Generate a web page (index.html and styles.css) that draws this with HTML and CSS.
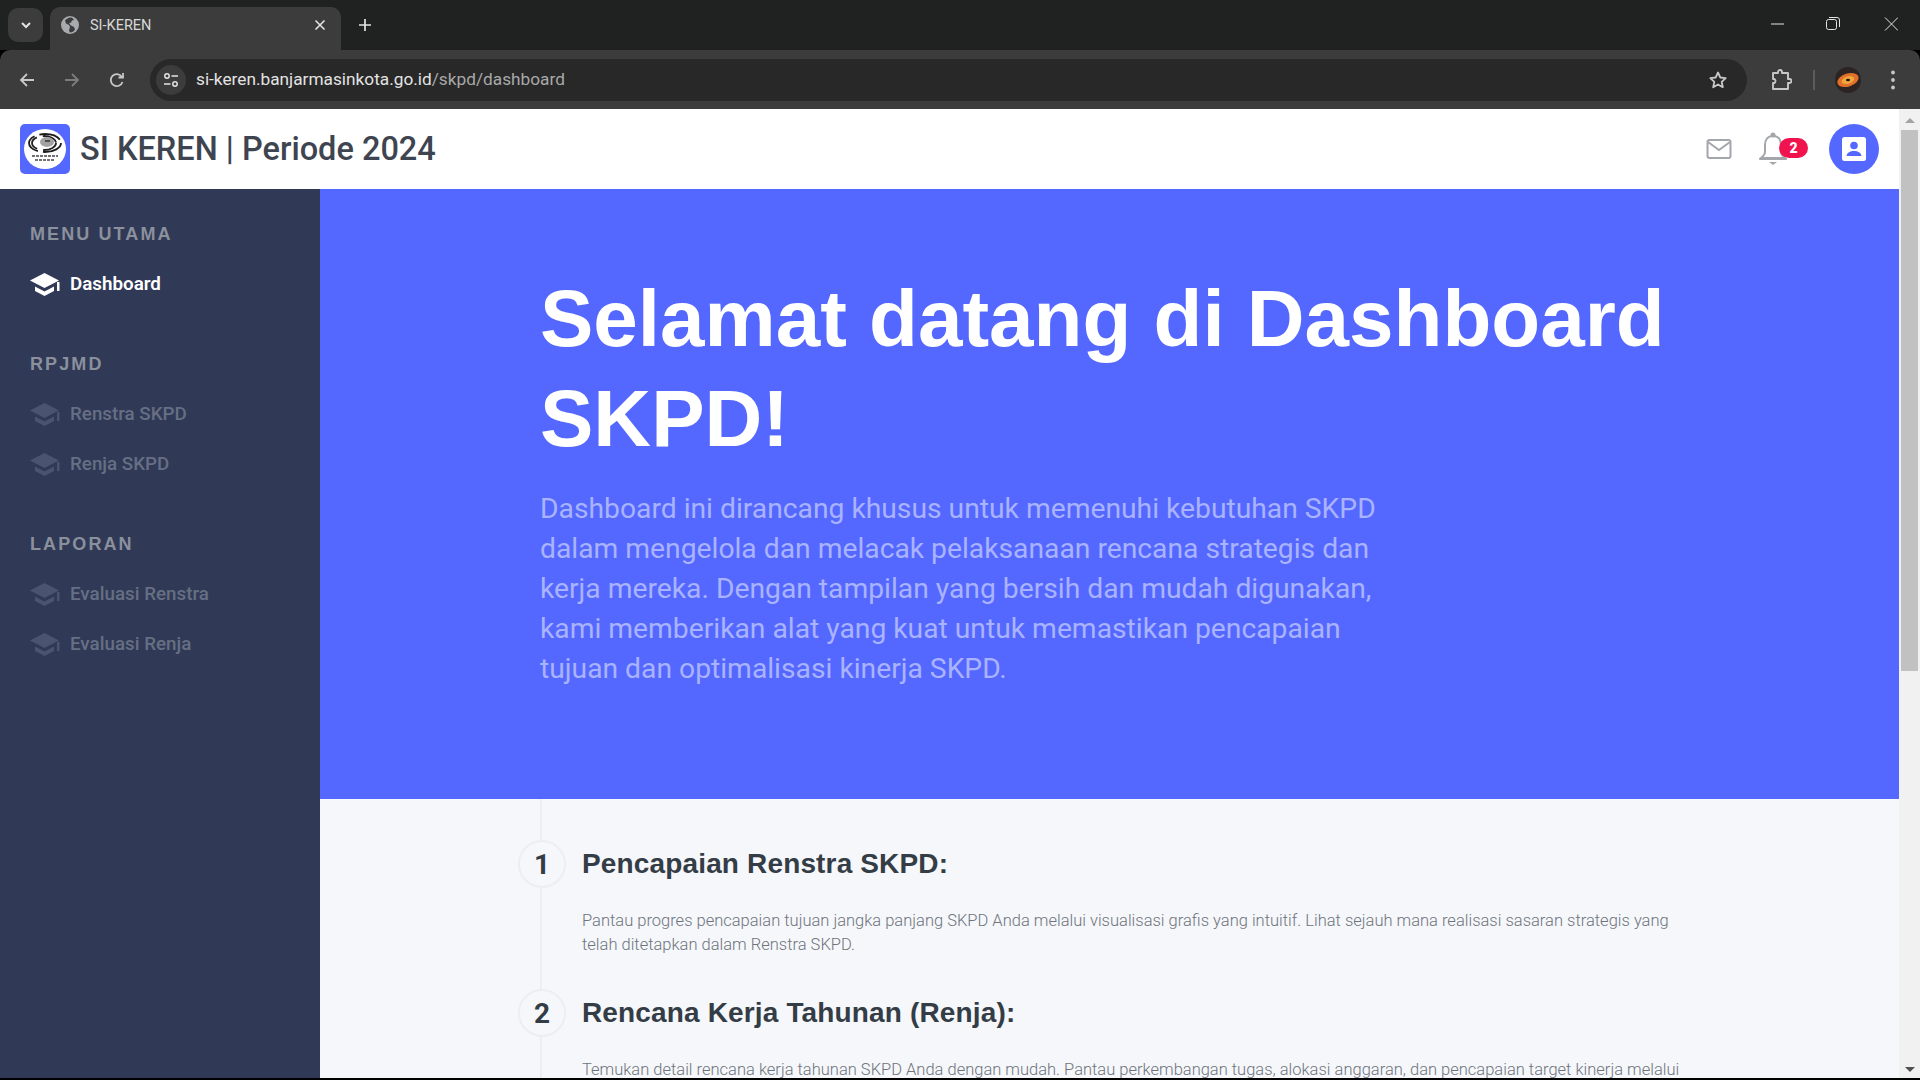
FILE: index.html
```html
<!DOCTYPE html>
<html lang="id">
<head>
    <meta charset="UTF-8">
    <title>SI-KEREN</title>
    <link rel="stylesheet" href="styles.css">
</head>
<body>
<div class="browser">
    <div class="tabstrip">
        <div class="tab-search">
            <svg width="14" height="14" viewBox="0 0 14 14"><path d="M3 5l4 4 4-4" fill="none" stroke="#e3e3e3" stroke-width="2"/></svg>
        </div>
        <div class="tab">
            <svg width="18" height="18" viewBox="0 0 18 18"><circle cx="9" cy="9" r="9" fill="#a8abad"/><path d="M9 1.500c-2 .5-4 1.500-5 3l1 3 3 1.500 1 2-1 3.500 1 2c2 0 4-1 5-3l-1-2.500-3-1.500-2-2 2-1 1-2 2-.5C12 2 10.500 1.500 9 1.500z" fill="#3c3c3c"/></svg>
            <span class="tab-title">SI-KEREN</span>
            <svg class="tab-close" width="14" height="14" viewBox="0 0 14 14"><path d="M2.500 2.500l9 9M11.500 2.500l-9 9" stroke="#e3e3e3" stroke-width="1.600"/></svg>
        </div>
        <svg class="new-tab" width="16" height="16" viewBox="0 0 16 16"><path d="M8 2v12M2 8h12" stroke="#e3e3e3" stroke-width="1.700"/></svg>
        <div class="win-controls">
            <svg width="16" height="16" viewBox="0 0 16 16"><path d="M3 8h13" stroke="#e3e3e3" stroke-width="1"/></svg>
            <svg width="16" height="16" viewBox="0 0 16 16"><rect x="1.500" y="3.500" width="10" height="10" rx="2" fill="none" stroke="#e3e3e3"/><path d="M4 1.500h8a2.500 2.500 0 0 1 2.500 2.500v7" fill="none" stroke="#e3e3e3"/></svg>
            <svg width="16" height="16" viewBox="0 0 16 16"><path d="M3 1.500l13 13M16 1.500l-13 13" stroke="#e3e3e3" stroke-width="1"/></svg>
        </div>
    </div>
    <div class="toolbar">
        <svg class="nav-icon" width="18" height="18" viewBox="0 0 18 18"><path d="M16 9H3M9 3L3 9l6 6" fill="none" stroke="#c7c7c7" stroke-width="1.800"/></svg>
        <svg class="nav-icon" width="18" height="18" viewBox="0 0 18 18"><path d="M2 9h13M9 3l6 6-6 6" fill="none" stroke="#7d7d7d" stroke-width="1.800"/></svg>
        <svg class="nav-icon" width="18" height="18" viewBox="0 0 18 18"><path d="M14.500 11a6 6 0 1 1-.7-5.200M15 2v4.500h-4.500" fill="none" stroke="#c7c7c7" stroke-width="1.800"/></svg>
        <div class="omnibox">
            <div class="site-info">
                <svg width="16" height="16" viewBox="0 0 16 16"><circle cx="4" cy="4" r="2.200" fill="none" stroke="#e3e3e3" stroke-width="1.500"/><path d="M8.500 4H15M1 12h6.500" stroke="#e3e3e3" stroke-width="1.500"/><circle cx="12" cy="12" r="2.200" fill="none" stroke="#e3e3e3" stroke-width="1.500"/></svg>
            </div>
            <span class="url">si-keren.banjarmasinkota.go.id<span class="url-path">/skpd/dashboard</span></span>
            <svg class="star" width="20" height="20" viewBox="0 0 20 20"><path d="M10 2.500l2.300 5 5.400.6-4 3.700 1.100 5.400L10 14.500l-4.800 2.700 1.100-5.400-4-3.700 5.400-.6z" fill="none" stroke="#c7c7c7" stroke-width="1.800" stroke-linejoin="round"/></svg>
        </div>
        <svg class="ext-icon" width="22" height="22" viewBox="0 0 22 22"><path d="M3 4h5V3a2 2 0 0 1 4 0v1h6v6h1.500a2 2 0 0 1 0 4H18v6H3v-6h1.500a2.500 2.500 0 0 0 0-4H3z" fill="none" stroke="#c7c7c7" stroke-width="1.900" stroke-linejoin="round"/></svg>
        <div class="tool-sep"></div>
        <svg class="profile" width="26" height="26" viewBox="0 0 26 26"><circle cx="13" cy="13" r="13" fill="#2b2422"/><ellipse cx="13" cy="13" rx="11" ry="6.500" transform="rotate(-18 13 13)" fill="#e0702a"/><ellipse cx="13" cy="13" rx="6.500" ry="3.600" transform="rotate(-18 13 13)" fill="#f0a63c"/><ellipse cx="13" cy="13" rx="2" ry="1.200" fill="#1c1410"/></svg>
        <svg class="dots" width="6" height="22" viewBox="0 0 6 22"><circle cx="3" cy="3.500" r="1.900" fill="#c7c7c7"/><circle cx="3" cy="11" r="1.900" fill="#c7c7c7"/><circle cx="3" cy="18.500" r="1.900" fill="#c7c7c7"/></svg>
    </div>
</div>

<div class="viewport">
    <div class="page">
        <header class="topbar">
            <div class="brand">
                <div class="brand-logo">
                    <svg width="42" height="42" viewBox="0 0 42 42">
                        <ellipse cx="21" cy="21" rx="21" ry="20" fill="#fff"/>
                        <ellipse cx="21" cy="15" rx="16" ry="9" fill="none" stroke="#1d1d1d" stroke-width="1.800" stroke-dasharray="22 5"/>
                        <ellipse cx="20" cy="15" rx="12" ry="7" fill="none" stroke="#222" stroke-width="1.800" stroke-dasharray="16 6"/>
                        <ellipse cx="23" cy="14" rx="7" ry="5" fill="#a2a2a2"/>
                        <path d="M21 13h5" stroke="#333" stroke-width="1.500"/>
                        <path d="M8 28h26M11 32h20" stroke="#444" stroke-width="1.500" stroke-dasharray="3 1"/>
                    </svg>
                </div>
                <span class="brand-title">SI KEREN | Periode 2024</span>
            </div>
            <div class="top-actions">
                <svg class="mail" width="26" height="22" viewBox="0 0 26 22"><rect x="1.500" y="2" width="23" height="18" rx="2" fill="none" stroke="#a3a6ab" stroke-width="2"/><path d="M2 4l11 8 11-8" fill="none" stroke="#a3a6ab" stroke-width="2"/></svg>
                <div class="bell-wrap">
                    <svg width="28" height="34" viewBox="0 0 28 34"><circle cx="14" cy="3" r="2.500" fill="#a3a6ab"/><path d="M14 4c-5.500 0-8 4-8 9v7c0 2-1.500 4-4 6h24c-2.500-2-4-4-4-6v-7c0-5-2.500-9-8-9z" fill="none" stroke="#a3a6ab" stroke-width="2"/><path d="M1 27h26" stroke="#a3a6ab" stroke-width="2" stroke-linecap="round"/><path d="M10 30h8l-4 3z" fill="#a3a6ab"/></svg>
                    <span class="badge">2</span>
                </div>
                <div class="avatar">
                    <svg width="24" height="24" viewBox="0 0 24 24"><rect width="24" height="24" rx="2.500" fill="#fff"/><circle cx="12" cy="8.500" r="3.800" fill="#5468ff"/><path d="M4.500 19c.5-3.500 3.500-5 7.500-5s7 1.500 7.500 5z" fill="#5468ff"/></svg>
                </div>
            </div>
        </header>

        <div class="layout">
            <nav class="sidebar">
                <div class="menu-label">MENU UTAMA</div>
                <a class="menu-item active"><svg class="cap" viewBox="0 0 30 24"><use href="#cap"/></svg>Dashboard</a>
                <div class="menu-label">RPJMD</div>
                <a class="menu-item"><svg class="cap" viewBox="0 0 30 24"><use href="#cap"/></svg>Renstra SKPD</a>
                <a class="menu-item"><svg class="cap" viewBox="0 0 30 24"><use href="#cap"/></svg>Renja SKPD</a>
                <div class="menu-label">LAPORAN</div>
                <a class="menu-item"><svg class="cap" viewBox="0 0 30 24"><use href="#cap"/></svg>Evaluasi Renstra</a>
                <a class="menu-item"><svg class="cap" viewBox="0 0 30 24"><use href="#cap"/></svg>Evaluasi Renja</a>
            </nav>

            <main class="content">
                <section class="hero">
                    <h1>Selamat datang di Dashboard SKPD!</h1>
                    <p>Dashboard ini dirancang khusus untuk memenuhi kebutuhan SKPD dalam mengelola dan melacak pelaksanaan rencana strategis dan kerja mereka. Dengan tampilan yang bersih dan mudah digunakan, kami memberikan alat yang kuat untuk memastikan pencapaian tujuan dan optimalisasi kinerja SKPD.</p>
                </section>
                <section class="steps">
                    <div class="step">
                        <div class="step-head"><span class="step-num">1</span><h3>Pencapaian Renstra SKPD:</h3></div>
                        <p>Pantau progres pencapaian tujuan jangka panjang SKPD Anda melalui visualisasi grafis yang intuitif. Lihat sejauh mana realisasi sasaran strategis yang telah ditetapkan dalam Renstra SKPD.</p>
                    </div>
                    <div class="step">
                        <div class="step-head"><span class="step-num">2</span><h3>Rencana Kerja Tahunan (Renja):</h3></div>
                        <p>Temukan detail rencana kerja tahunan SKPD Anda dengan mudah. Pantau perkembangan tugas, alokasi anggaran, dan pencapaian target kinerja melalui</p>
                    </div>
                </section>
            </main>
        </div>
    </div>

    <div class="scrollbar">
        <div class="scroll-arrow up"></div>
        <div class="scroll-thumb"></div>
        <div class="scroll-arrow down"></div>
    </div>
</div>

<svg class="defs" width="0" height="0">
    <symbol id="cap" viewBox="0 0 30 24">
        <path d="M14.500 1L0 8.500l14.500 7.500L29 8.500z" fill="currentColor"/>
        <path d="M5 14.500v4.500l9.500 5 9.500-5v-4.500l-9.500 5z" fill="currentColor"/>
        <rect x="27" y="10" width="2.500" height="9" fill="currentColor"/>
    </symbol>
</svg>
</body>
</html>
```
FILE: styles.css
```css
* {
    box-sizing: border-box;
}
html, body {
    margin: 0;
    height: 1080px;
    overflow: hidden;
    background: #000;
    font-family: Roboto, sans-serif;
}
.defs {
    display: block;
}

/* browser chrome */
.tabstrip {
    height: 50px;
    background: #202221;
    display: flex;
    align-items: flex-start;
    padding: 8px 0 0 8px;
}
.tab-search {
    width: 35px;
    height: 34px;
    background: #3c3c3c;
    border-radius: 10px;
    display: flex;
    align-items: center;
    justify-content: center;
}
.tab {
    width: 291px;
    height: 43px;
    margin: -1px 0 0 7px;
    padding: 0 14px 7px 11px;
    background: #3c3c3c;
    border-radius: 10px 10px 0 0;
    display: flex;
    align-items: center;
    gap: 11px;
}
.tab-title {
    flex: 1;
    color: #d8d8d8;
    font-size: 14.5px;
}
.new-tab {
    margin: 9px 0 0 16px;
}
.win-controls {
    margin-left: auto;
    display: flex;
    gap: 41px;
    padding: 8px 22px 0 0;
}
.toolbar {
    height: 59px;
    background: #3c3c3c;
    border-radius: 10px 10px 0 0;
    display: flex;
    align-items: center;
    padding: 0 18px;
}
.nav-icon {
    margin-right: 27px;
}
.nav-icon:nth-child(3) {
    margin-right: 24px;
}
.omnibox {
    width: 1597px;
    height: 42px;
    background: #282828;
    border-radius: 21px;
    display: flex;
    align-items: center;
    padding: 0 19px 0 6px;
}
.site-info {
    width: 30px;
    height: 30px;
    border-radius: 50%;
    background: #3c3c3c;
    display: flex;
    align-items: center;
    justify-content: center;
}
.url {
    margin-left: 10px;
    margin-bottom: 1px;
    font-size: 17.25px;
    color: #e3e3e3;
}
.url-path {
    color: #a8a8a8;
}
.star {
    margin-left: auto;
}
.ext-icon {
    margin-left: 23px;
}
.tool-sep {
    width: 2px;
    height: 20px;
    margin-left: 21px;
    background: #5c5c5c;
}
.profile {
    margin-left: 20px;
}
.dots {
    margin-left: 29px;
}

/* page */
.viewport {
    height: 969px;
    display: flex;
    overflow: hidden;
    background: #f5f7fb;
}
.page {
    width: 1899px;
}
.topbar {
    height: 80px;
    background: #fff;
    display: flex;
    align-items: center;
    justify-content: space-between;
    padding: 0 20px 0 20px;
}
.brand {
    display: flex;
    align-items: center;
    gap: 10px;
}
.brand-logo {
    width: 50px;
    height: 50px;
    background: #5468ff;
    border-radius: 5px;
    display: flex;
    align-items: center;
    justify-content: center;
}
.brand-title {
    font-size: 32.5px;
    font-weight: 500;
    line-height: 48px;
    color: #3e4551;
}
.top-actions {
    display: flex;
    align-items: center;
}
.bell-wrap {
    position: relative;
    width: 49px;
    margin: 0 21px 0 27px;
    display: flex;
}
.badge {
    position: absolute;
    left: 20px;
    top: 6px;
    width: 29px;
    height: 20px;
    border-radius: 10px;
    background: #f0134d;
    color: #fff;
    font-size: 14px;
    font-weight: 900;
    line-height: 20px;
    text-align: center;
}
.avatar {
    width: 50px;
    height: 50px;
    border-radius: 50%;
    background: #5468ff;
    display: flex;
    align-items: center;
    justify-content: center;
}

.layout {
    display: flex;
    height: 889px;
}
.sidebar {
    width: 320px;
    flex-shrink: 0;
    background: #303956;
    padding: 30px 0 0 30px;
}
.menu-label {
    height: 30px;
    line-height: 30px;
    font-family: "Liberation Sans", Arial, sans-serif;
    font-size: 18px;
    font-weight: 700;
    letter-spacing: 2.1px;
    color: #8a909c;
    margin: 0 0 10px;
}
.menu-item + .menu-label {
    margin-top: 40px;
}
.menu-item {
    display: flex;
    align-items: center;
    height: 50px;
    gap: 10px;
    font-size: 18.8px;
    font-weight: 500;
    color: #666f84;
}
.menu-item.active {
    color: #fff;
    font-weight: 600;
}
.cap {
    width: 30px;
    height: 24px;
    color: #4a5470;
}
.active .cap {
    color: #fff;
}

.content {
    flex: 1;
    overflow: hidden;
}
.hero {
    height: 610px;
    background: #5468ff;
    padding: 80px 220px 0;
}
.hero h1 {
    margin: 0 0 20px;
    font-family: "Liberation Sans", Arial, sans-serif;
    font-size: 80px;
    line-height: 100px;
    font-weight: 700;
    color: #fff;
}
.hero p {
    width: 850px;
    margin: 0;
    font-size: 28.25px;
    line-height: 40px;
    color: #a9b3ff;
}
.steps {
    margin-left: 220px;
    padding-top: 41px;
    border-left: 2px solid #eceef3;
    width: 1140px;
}
.step {
    margin-bottom: 32px;
}
.step-head {
    display: flex;
    align-items: center;
    gap: 16px;
    margin-left: -24px;
}
.step-num {
    width: 48px;
    height: 48px;
    border-radius: 50%;
    background: #f5f7fb;
    border: 2px solid #eceef3;
    color: #343d46;
    font-size: 28px;
    font-weight: 700;
    display: flex;
    align-items: center;
    justify-content: center;
}
.step-head h3 {
    margin: 0;
    font-family: "Liberation Sans", Arial, sans-serif;
    font-size: 28px;
    font-weight: 700;
    letter-spacing: 0.15px;
    color: #343d46;
}
.step p {
    margin: 21px 0 0 40px;
    font-size: 16.5px;
    font-weight: 300;
    line-height: 24px;
    color: #6f747b;
}

/* scrollbar */
.scrollbar {
    width: 21px;
    background: #f1f1f1;
    display: flex;
    flex-direction: column;
    align-items: center;
    padding: 0 2px;
}
.scroll-arrow {
    width: 0;
    height: 0;
    border-left: 5px solid transparent;
    border-right: 5px solid transparent;
}
.scroll-arrow.up {
    margin: 9px 0 7px;
    border-bottom: 5px solid #a3a3a3;
}
.scroll-arrow.down {
    margin-top: auto;
    margin-bottom: 6px;
    border-top: 5px solid #505050;
}
.scroll-thumb {
    width: 100%;
    height: 541px;
    background: #c1c1c1;
}
```
